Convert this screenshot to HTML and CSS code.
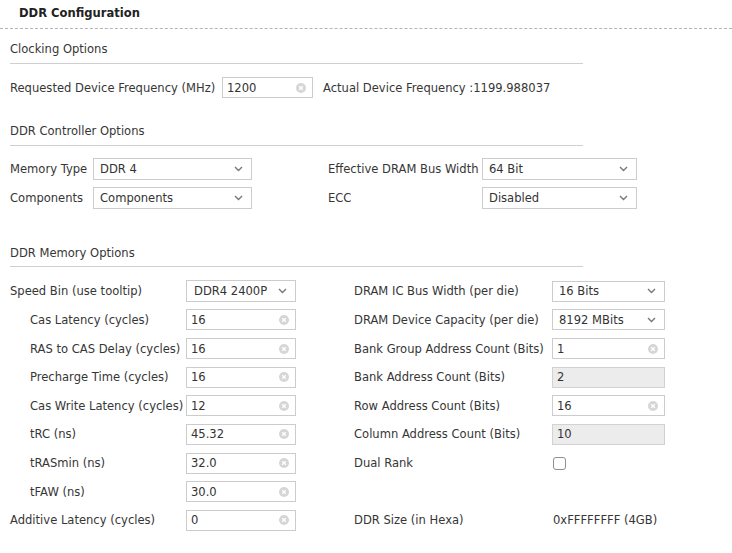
FILE: index.html
```html
<!DOCTYPE html>
<html>
<head>
<meta charset="utf-8">
<link rel="stylesheet" href="styles.css">
</head>
<body>
<div class="header">DDR Configuration</div>

<div class="sec-title first">Clocking Options</div>
<div class="clock-row">
  <span class="label">Requested Device Frequency (MHz)</span>
  <div class="field w-clock"><span>1200</span><svg class="clear" width="10" height="10" viewBox="0 0 10 10"><circle cx="5" cy="5" r="5" fill="#d6d6d6"/><path d="M3.2 3.2 L6.8 6.8 M6.8 3.2 L3.2 6.8" stroke="#fff" stroke-width="1.3"/></svg></div>
  <span class="actual">Actual Device Frequency :1199.988037</span>
</div>

<div class="sec-title">DDR Controller Options</div>
<div class="ctrl-grid">
  <span class="label">Memory Type</span>
  <div class="field select"><span>DDR 4</span><svg class="chev" width="9" height="6" viewBox="0 0 9 6"><polyline points="1,1 4.5,4.5 8,1" fill="none" stroke="#777" stroke-width="1.4"/></svg></div>
  <span class="label col2">Effective DRAM Bus Width</span>
  <div class="field select"><span>64 Bit</span><svg class="chev" width="9" height="6" viewBox="0 0 9 6"><polyline points="1,1 4.5,4.5 8,1" fill="none" stroke="#777" stroke-width="1.4"/></svg></div>
  <span class="label">Components</span>
  <div class="field select"><span>Components</span><svg class="chev" width="9" height="6" viewBox="0 0 9 6"><polyline points="1,1 4.5,4.5 8,1" fill="none" stroke="#777" stroke-width="1.4"/></svg></div>
  <span class="label col2">ECC</span>
  <div class="field select"><span>Disabled</span><svg class="chev" width="9" height="6" viewBox="0 0 9 6"><polyline points="1,1 4.5,4.5 8,1" fill="none" stroke="#777" stroke-width="1.4"/></svg></div>
</div>

<div class="sec-title mem">DDR Memory Options</div>
<div class="mem-cols">
  <div class="mem-left">
    <span class="label">Speed Bin (use tooltip)</span>
    <div class="field select sel-speed"><span>DDR4 2400P</span><svg class="chev" width="9" height="6" viewBox="0 0 9 6"><polyline points="1,1 4.5,4.5 8,1" fill="none" stroke="#777" stroke-width="1.4"/></svg></div>

    <span class="label ind">Cas Latency (cycles)</span>
    <div class="field"><span>16</span><svg class="clear" width="10" height="10" viewBox="0 0 10 10"><circle cx="5" cy="5" r="5" fill="#d6d6d6"/><path d="M3.2 3.2 L6.8 6.8 M6.8 3.2 L3.2 6.8" stroke="#fff" stroke-width="1.3"/></svg></div>

    <span class="label ind">RAS to CAS Delay (cycles)</span>
    <div class="field"><span>16</span><svg class="clear" width="10" height="10" viewBox="0 0 10 10"><circle cx="5" cy="5" r="5" fill="#d6d6d6"/><path d="M3.2 3.2 L6.8 6.8 M6.8 3.2 L3.2 6.8" stroke="#fff" stroke-width="1.3"/></svg></div>

    <span class="label ind">Precharge Time (cycles)</span>
    <div class="field"><span>16</span><svg class="clear" width="10" height="10" viewBox="0 0 10 10"><circle cx="5" cy="5" r="5" fill="#d6d6d6"/><path d="M3.2 3.2 L6.8 6.8 M6.8 3.2 L3.2 6.8" stroke="#fff" stroke-width="1.3"/></svg></div>

    <span class="label ind">Cas Write Latency (cycles)</span>
    <div class="field"><span>12</span><svg class="clear" width="10" height="10" viewBox="0 0 10 10"><circle cx="5" cy="5" r="5" fill="#d6d6d6"/><path d="M3.2 3.2 L6.8 6.8 M6.8 3.2 L3.2 6.8" stroke="#fff" stroke-width="1.3"/></svg></div>

    <span class="label ind">tRC (ns)</span>
    <div class="field"><span>45.32</span><svg class="clear" width="10" height="10" viewBox="0 0 10 10"><circle cx="5" cy="5" r="5" fill="#d6d6d6"/><path d="M3.2 3.2 L6.8 6.8 M6.8 3.2 L3.2 6.8" stroke="#fff" stroke-width="1.3"/></svg></div>

    <span class="label ind">tRASmin (ns)</span>
    <div class="field"><span>32.0</span><svg class="clear" width="10" height="10" viewBox="0 0 10 10"><circle cx="5" cy="5" r="5" fill="#d6d6d6"/><path d="M3.2 3.2 L6.8 6.8 M6.8 3.2 L3.2 6.8" stroke="#fff" stroke-width="1.3"/></svg></div>

    <span class="label ind">tFAW (ns)</span>
    <div class="field"><span>30.0</span><svg class="clear" width="10" height="10" viewBox="0 0 10 10"><circle cx="5" cy="5" r="5" fill="#d6d6d6"/><path d="M3.2 3.2 L6.8 6.8 M6.8 3.2 L3.2 6.8" stroke="#fff" stroke-width="1.3"/></svg></div>

    <span class="label">Additive Latency (cycles)</span>
    <div class="field"><span>0</span><svg class="clear" width="10" height="10" viewBox="0 0 10 10"><circle cx="5" cy="5" r="5" fill="#d6d6d6"/><path d="M3.2 3.2 L6.8 6.8 M6.8 3.2 L3.2 6.8" stroke="#fff" stroke-width="1.3"/></svg></div>
  </div>

  <div class="mem-right">
    <span class="label">DRAM IC Bus Width (per die)</span>
    <div class="field select"><span>16 Bits</span><svg class="chev" width="9" height="6" viewBox="0 0 9 6"><polyline points="1,1 4.5,4.5 8,1" fill="none" stroke="#777" stroke-width="1.4"/></svg></div>

    <span class="label">DRAM Device Capacity (per die)</span>
    <div class="field select"><span>8192 MBits</span><svg class="chev" width="9" height="6" viewBox="0 0 9 6"><polyline points="1,1 4.5,4.5 8,1" fill="none" stroke="#777" stroke-width="1.4"/></svg></div>

    <span class="label">Bank Group Address Count (Bits)</span>
    <div class="field"><span>1</span><svg class="clear" width="10" height="10" viewBox="0 0 10 10"><circle cx="5" cy="5" r="5" fill="#d6d6d6"/><path d="M3.2 3.2 L6.8 6.8 M6.8 3.2 L3.2 6.8" stroke="#fff" stroke-width="1.3"/></svg></div>

    <span class="label">Bank Address Count (Bits)</span>
    <div class="field disabled"><span>2</span></div>

    <span class="label">Row Address Count (Bits)</span>
    <div class="field"><span>16</span><svg class="clear" width="10" height="10" viewBox="0 0 10 10"><circle cx="5" cy="5" r="5" fill="#d6d6d6"/><path d="M3.2 3.2 L6.8 6.8 M6.8 3.2 L3.2 6.8" stroke="#fff" stroke-width="1.3"/></svg></div>

    <span class="label">Column Address Count (Bits)</span>
    <div class="field disabled"><span>10</span></div>

    <span class="label">Dual Rank</span>
    <div class="cell"><span class="checkbox"></span></div>

    <span class="label"></span>
    <div class="cell"></div>

    <span class="label">DDR Size (in Hexa)</span>
    <div class="cell value">0xFFFFFFFF (4GB)</div>
  </div>
</div>
</body>
</html>
```

FILE: styles.css
```css
html, body {
  margin: 0;
  padding: 0;
  background: #ffffff;
}
body {
  font-family: "DejaVu Sans", Verdana, sans-serif;
  font-size: 11.55px;
  color: #363636;
  width: 732px;
  height: 553px;
  overflow: hidden;
}
.header {
  height: 28px;
  line-height: 26px;
  padding-left: 19px;
  font-weight: bold;
  color: #222222;
  border-bottom: 1px dashed #b4b4b4;
}
.sec-title {
  margin-left: 10px;
  width: 573px;
  line-height: 18px;
  padding-top: 24px;
  padding-bottom: 5px;
  border-bottom: 1px solid #cfcfcf;
}
.sec-title.first {
  padding-top: 11px;
}
.sec-title.mem {
  padding-top: 35px;
  padding-bottom: 4px;
}
.label {
  white-space: nowrap;
  display: flex;
  align-items: center;
}
.label.ind {
  padding-left: 20px;
}
.field {
  box-sizing: border-box;
  height: 21px;
  border: 1px solid #cccccc;
  background: #ffffff;
  display: flex;
  align-items: center;
  justify-content: space-between;
  padding: 0 6px 0 4px;
  color: #333333;
}
.field.select {
  padding-left: 6px;
  padding-right: 8px;
}
.field.disabled {
  background: #ececec;
  border-color: #d2d2d2;
}
.clear, .chev {
  flex: none;
}
.clock-row {
  display: flex;
  align-items: center;
  padding-top: 13px;
  padding-left: 10px;
}
.clock-row .label {
  width: 212px;
}
.w-clock {
  width: 91px;
}
.actual {
  margin-left: 10px;
}
.ctrl-grid {
  display: grid;
  grid-template-columns: 83px 159px 230px 155px;
  row-gap: 7px;
  padding-top: 12px;
  padding-left: 10px;
}
.ctrl-grid .field {
  height: 22px;
}
.ctrl-grid .col2 {
  padding-left: 76px;
}
.mem-cols {
  display: flex;
  padding-top: 10px;
  padding-left: 10px;
}
.mem-left {
  display: grid;
  grid-template-columns: 176px 110px;
  grid-auto-rows: 28.625px;
  align-items: center;
}
.mem-right {
  margin-left: 58px;
  display: grid;
  grid-template-columns: 198px 113px;
  grid-auto-rows: 28.625px;
  align-items: center;
}
.mem-left .label, .mem-right .label {
  height: 100%;
}
.mem-left .sel-speed {
  height: 22px;
  padding-left: 7px;
}
.cell {
  display: flex;
  align-items: center;
  height: 21px;
}
.value {
  padding-left: 1px;
}
.checkbox {
  display: inline-block;
  box-sizing: border-box;
  width: 13px;
  height: 13px;
  margin-left: 1px;
  margin-top: 1px;
  border: 1px solid #8f8f8f;
  border-radius: 3px;
  background: #ffffff;
}
```
